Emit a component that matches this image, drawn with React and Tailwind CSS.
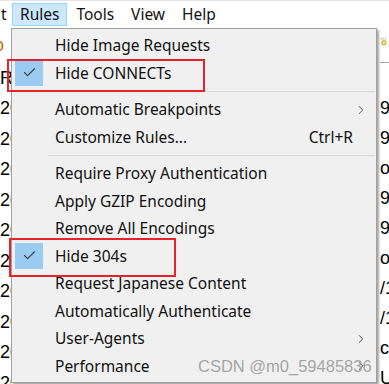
import { Check, ChevronRight } from 'lucide-react';

const items = [
  { label: 'Hide Image Requests' },
  { label: 'Hide CONNECTs', checked: true },
  { sep: true },
  { label: 'Automatic Breakpoints', sub: true },
  { label: 'Customize Rules...', shortcut: 'Ctrl+R' },
  { sep: true },
  { label: 'Require Proxy Authentication' },
  { label: 'Apply GZIP Encoding' },
  { label: 'Remove All Encodings' },
  { label: 'Hide 304s', checked: true },
  { label: 'Request Japanese Content' },
  { label: 'Automatically Authenticate' },
  { label: 'User-Agents', sub: true },
  { label: 'Performance', sub: true },
];

const leftRows = ['R', '2024', '2024', '2024', '2024', '2024', '2024', '2024', '2024', '2024', '2024'];
const rightRows = ['9a', '9a', 'ol', '9a', '9a', 'ol', '/1', '/1', 'co', 'U'];

function MenuRow({ item }) {
  if (item.sep) {
    return (
      <div className="h-[9px] flex items-center pl-[36px] pr-[1px]">
        <div className="h-px w-full bg-[#d8d8d8]" />
      </div>
    );
  }
  return (
    <div className="relative h-[27.5px] flex items-center">
      {item.checked && (
        <div className="absolute left-[3px] top-0 w-[28px] h-[26px] bg-[#99cbf3] flex items-center justify-center">
          <Check size={15} strokeWidth={1.75} className="text-[#3c3c3c]" />
        </div>
      )}
      <span className="pl-[43px] flex-1 text-[15.5px] text-[#111] whitespace-nowrap">{item.label}</span>
      {item.shortcut && <span className="text-[15.5px] text-[#111]">{item.shortcut}</span>}
      <div className="w-[23px] flex items-center">
        {item.sub && <ChevronRight size={14} strokeWidth={1.5} className="ml-[1px] text-[#3a3a3a]" />}
      </div>
    </div>
  );
}

export default function App() {
  return (
    <div className="relative w-[389px] h-[384px] overflow-hidden bg-white font-['Noto_Sans',sans-serif]">
      {/* menu bar */}
      <div className="h-[28px] border-t border-[#e3e3e3] flex items-center text-[15.5px] text-[#111]">
        <span className="ml-[-3px] w-[15px] overflow-hidden">it</span>
        <span className="h-[23px] px-[7px] flex items-center bg-[#cce8ff] border border-[#99d1ff]">Rules</span>
        <span className="ml-[9px]">Tools</span>
        <span className="ml-[17px]">View</span>
        <span className="ml-[17px]">Help</span>
      </div>

      {/* session list behind the menu */}
      <div className="flex justify-between">
        <div className="w-[11px] overflow-hidden">
          <div className="h-[35px] flex items-center text-[18px] text-[#222] font-['Liberation_Sans',sans-serif] ml-[-6px]">
            <span className="text-[#c46a10]">o</span>
          </div>
          {leftRows.map((t, i) => (
            <div key={i} className="h-[30.5px] flex items-center text-[18px] text-black font-['Liberation_Sans',sans-serif] whitespace-nowrap">
              {t}
            </div>
          ))}
        </div>
        <div className="w-[9px] overflow-hidden">
          <div className="h-[35px] border-b border-[#a8a8a8] flex items-start pt-[6px]">
            <svg width="14" height="16" viewBox="0 0 14 16">
              <circle cx="6" cy="9" r="4" fill="#d8b52a" />
              <circle cx="6" cy="9" r="1.6" fill="#fff" />
              <circle cx="2" cy="3" r="1" fill="#6e7fd0" />
              <circle cx="5" cy="3" r="1" fill="#6e7fd0" />
              <circle cx="8" cy="3" r="1" fill="#6e7fd0" />
            </svg>
          </div>
          <div className="h-[30px]" />
          {rightRows.map((t, i) => (
            <div key={i} className="h-[30px] flex items-center text-[18px] text-black font-['Liberation_Sans',sans-serif] whitespace-nowrap">
              {t}
            </div>
          ))}
        </div>
      </div>

      {/* Rules dropdown */}
      <div className="absolute left-[11px] top-[28px] w-[366px] bg-[#f0f0f0] border border-[#a0a0a0] shadow-[2px_2px_2px_rgba(0,0,0,0.35)] pt-[3px] pb-[2px]">
        {items.map((item, i) => (
          <MenuRow key={i} item={item} />
        ))}
      </div>

      {/* annotation boxes */}
      <div className="absolute left-[7px] top-[59px] w-[198px] h-[33px] border-2 border-[#e5232b]" />
      <div className="absolute left-[9px] top-[238px] w-[167px] h-[39px] border-2 border-[#e5232b]" />

      {/* watermark */}
      <div className="absolute left-[198px] top-[354px] text-[16.5px] text-[#9a9a9a]/90 font-['Liberation_Sans',sans-serif] whitespace-nowrap">
        CSDN @m0_59485836
      </div>
    </div>
  );
}
